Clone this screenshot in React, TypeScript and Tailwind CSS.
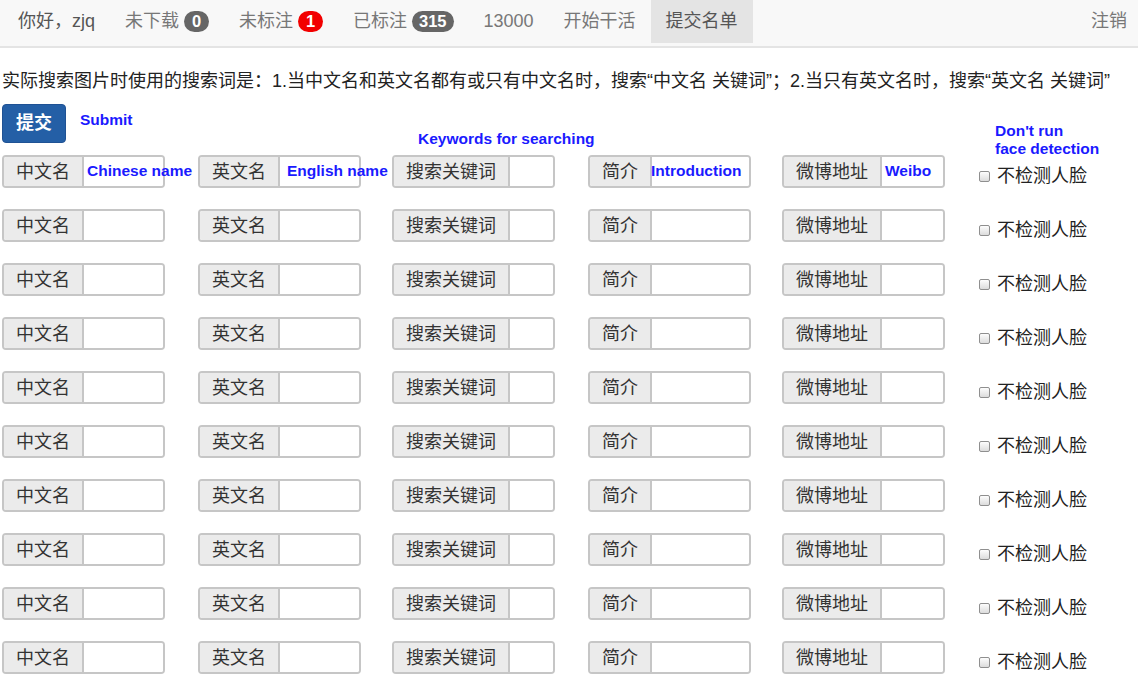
import React from 'react';

const FONT = { fontFamily: '"Liberation Sans", "Noto Sans CJK SC", sans-serif' };

const NAV_ITEMS: { label: string; badge?: string; red?: boolean; active?: boolean; dark?: boolean }[] = [
  { label: '你好，zjq', dark: true },
  { label: '未下载', badge: '0' },
  { label: '未标注', badge: '1', red: true },
  { label: '已标注', badge: '315' },
  { label: '13000' },
  { label: '开始干活' },
  { label: '提交名单', active: true },
];

// addon label, input hint shown on the first row, column width
const FIELDS: { addon: string; hint?: string; hintPos?: string; col: string }[] = [
  { addon: '中文名', hint: 'Chinese name', hintPos: 'left-[85px]', col: 'w-[196px]' },
  { addon: '英文名', hint: 'English name', hintPos: 'left-[89px]', col: 'w-[194px]' },
  { addon: '搜索关键词', col: 'w-[196px]' },
  { addon: '简介', hint: 'Introduction', hintPos: 'left-[63px]', col: 'w-[194px]' },
  { addon: '微博地址', hint: 'Weibo', hintPos: 'left-[103px]', col: 'w-[196px]' },
];

const ROWS = Array.from({ length: 10 }, (_, i) => i);

function Hint({ children, className = '' }: { children: React.ReactNode; className?: string }) {
  return (
    <span className={`font-bold text-[15.5px] leading-[18px] text-[#1a1aff] whitespace-nowrap ${className}`}>
      {children}
    </span>
  );
}

function InputGroup({ addon }: { addon: string }) {
  return (
    <div className="flex h-[33px] w-[163px] rounded-[4px] border-2 border-[#c6c6c6]">
      <div className="flex items-center bg-[#ebebeb] px-[12px] pt-[2px] text-[18px] text-[#333] border-r-2 border-[#c6c6c6] rounded-l-[2px]">
        {addon}
      </div>
      <div className="flex-1 bg-white rounded-r-[2px]" />
    </div>
  );
}

export default function App() {
  return (
    <div className="min-h-[694px] bg-white" style={FONT}>
      {/* Navbar */}
      <nav className="flex h-[48px] items-start bg-[#f8f8f8] border-b-2 border-[#e4e4e4] pl-[3px] pr-[11px]">
        {NAV_ITEMS.map((it) => (
          <div
            key={it.label}
            className={`flex h-[43px] items-center gap-[5px] px-[15px] text-[18px] ${
              it.active ? 'bg-[#e4e4e4] text-[#555]' : it.dark ? 'text-[#555]' : 'text-[#777]'
            }`}
          >
            <span>{it.label}</span>
            {it.badge && (
              <span
                className={`flex h-[21px] min-w-[25px] items-center justify-center rounded-full px-[7px] text-[16.5px] font-bold text-white ${
                  it.red ? 'bg-[#f20000]' : 'bg-[#666]'
                }`}
              >
                {it.badge}
              </span>
            )}
          </div>
        ))}
        <div className="ml-auto flex h-[43px] items-center text-[18px] text-[#777]">注销</div>
      </nav>

      <div className="pl-[2px]">
        <p className="mt-[21px] text-[18px] leading-[24px] text-[#222] whitespace-nowrap">
          实际搜索图片时使用的搜索词是：1.当中文名和英文名都有或只有中文名时，搜索“中文名 关键词”；2.当只有英文名时，搜索“英文名 关键词”
        </p>

        <div className="mt-[11px] flex items-start">
          <button className="h-[39px] w-[64px] rounded-[4px] bg-[#245fa6] border border-[#1f5294] text-[18px] font-bold text-white">
            提交
          </button>
          <Hint className="ml-[14px] mt-[7px]">Submit</Hint>
        </div>

        <div className="mt-[12px] flex flex-col gap-[21px]">
          {ROWS.map((r) => (
            <div key={r} className="flex h-[33px] items-start">
              {FIELDS.map((f, i) => (
                <div key={f.addon} className={`relative ${f.col}`}>
                  <InputGroup addon={f.addon} />
                  {r === 0 && f.hint && <Hint className={`absolute top-[7px] ${f.hintPos}`}>{f.hint}</Hint>}
                  {r === 0 && i === 2 && (
                    <Hint className="absolute left-[26px] top-[-25px]">Keywords for searching</Hint>
                  )}
                </div>
              ))}
              <div className="relative flex h-[33px] items-center pt-[9px] pl-[1px]">
                <span className="h-[11px] w-[11px] rounded-[2px] border border-[#8f8f8f] bg-gradient-to-b from-[#fdfdfd] to-[#dcdcdc]" />
                <span className="ml-[7px] text-[18px] leading-[24px] text-[#222]">不检测人脸</span>
                {r === 0 && (
                  <div className="absolute left-[17px] top-[-33px] flex flex-col">
                    <Hint>Don't run</Hint>
                    <Hint>face detection</Hint>
                  </div>
                )}
              </div>
            </div>
          ))}
        </div>
      </div>
    </div>
  );
}
